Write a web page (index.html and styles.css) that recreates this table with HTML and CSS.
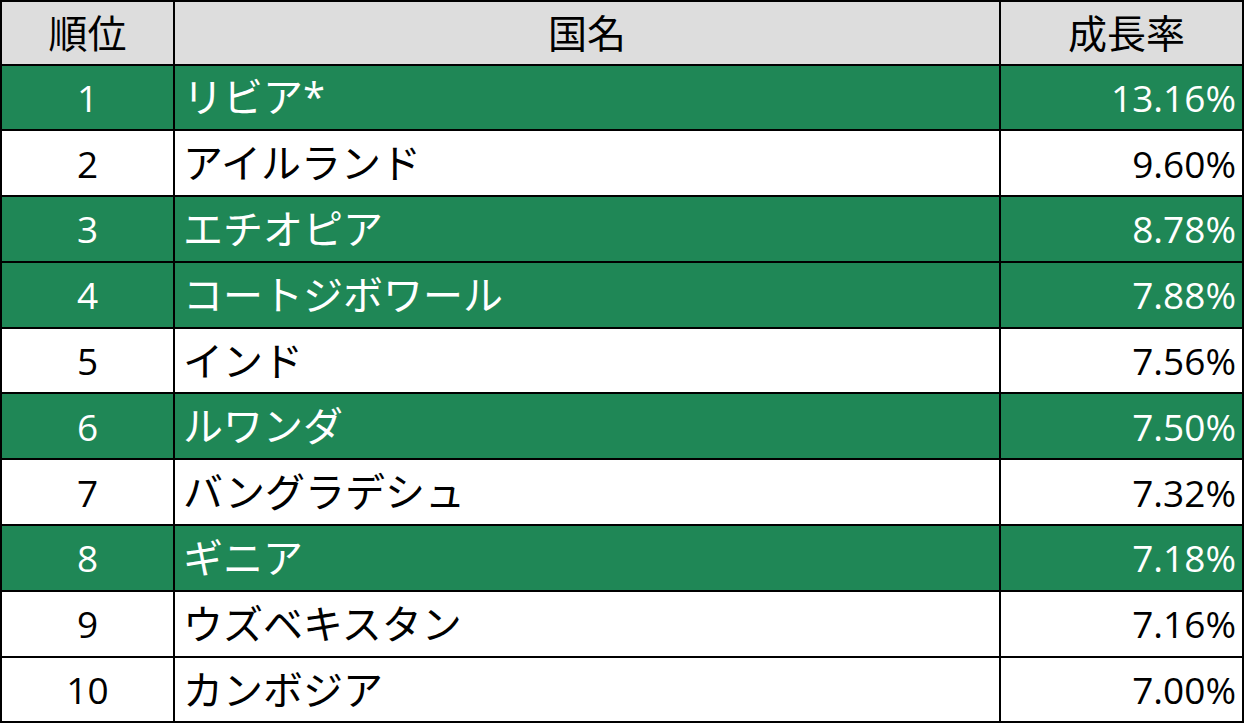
FILE: index.html
```
<!DOCTYPE html>
<html lang="ja">
<head>
<meta charset="utf-8">
<link rel="stylesheet" href="styles.css">
</head>
<body>
<table class="rank">
<colgroup><col class="c1"><col class="c2"><col class="c3"></colgroup>
<thead>
<tr><th>順位</th><th>国名</th><th class="hr">成長率</th></tr>
</thead>
<tbody>
<tr class="g"><td class="n">1</td><td class="name">リビア*</td><td class="r">13.16%</td></tr>
<tr><td class="n">2</td><td class="name">アイルランド</td><td class="r">9.60%</td></tr>
<tr class="g"><td class="n">3</td><td class="name">エチオピア</td><td class="r">8.78%</td></tr>
<tr class="g"><td class="n">4</td><td class="name">コートジボワール</td><td class="r">7.88%</td></tr>
<tr><td class="n">5</td><td class="name">インド</td><td class="r">7.56%</td></tr>
<tr class="g"><td class="n">6</td><td class="name">ルワンダ</td><td class="r">7.50%</td></tr>
<tr><td class="n">7</td><td class="name">バングラデシュ</td><td class="r">7.32%</td></tr>
<tr class="g"><td class="n">8</td><td class="name">ギニア</td><td class="r">7.18%</td></tr>
<tr><td class="n">9</td><td class="name">ウズベキスタン</td><td class="r">7.16%</td></tr>
<tr><td class="n">10</td><td class="name">カンボジア</td><td class="r">7.00%</td></tr>
</tbody>
</table>
</body>
</html>
```
FILE: styles.css
```
html, body {
  margin: 0;
  padding: 0;
  background: #ffffff;
}
.rank {
  border-collapse: collapse;
  width: 1242px;
  table-layout: fixed;
  font-family: "Open Sans", "Noto Sans CJK JP", sans-serif;
  font-size: 40px;
  color: #000;
}
.c1 { width: 173px; }
.c2 { width: 826px; }
.c3 { width: 243px; }
.rank th, .rank td {
  border: 2px solid #000;
  height: 63.8px;
  padding: 0;
  line-height: 1;
  font-weight: normal;
  vertical-align: middle;
}
.rank th {
  background: #dddddd;
  text-align: center;
  font-size: 39px;
  height: 61.5px;
}
.rank th.hr { padding-left: 10px; }
.rank tr.g td {
  background: #1f8756;
  color: #ffffff;
}
.n { text-align: center; font-size: 37px; }
.name { text-align: left; padding-left: 8px !important; }
.r { text-align: right; padding-right: 6px !important; font-size: 37px; }
```
